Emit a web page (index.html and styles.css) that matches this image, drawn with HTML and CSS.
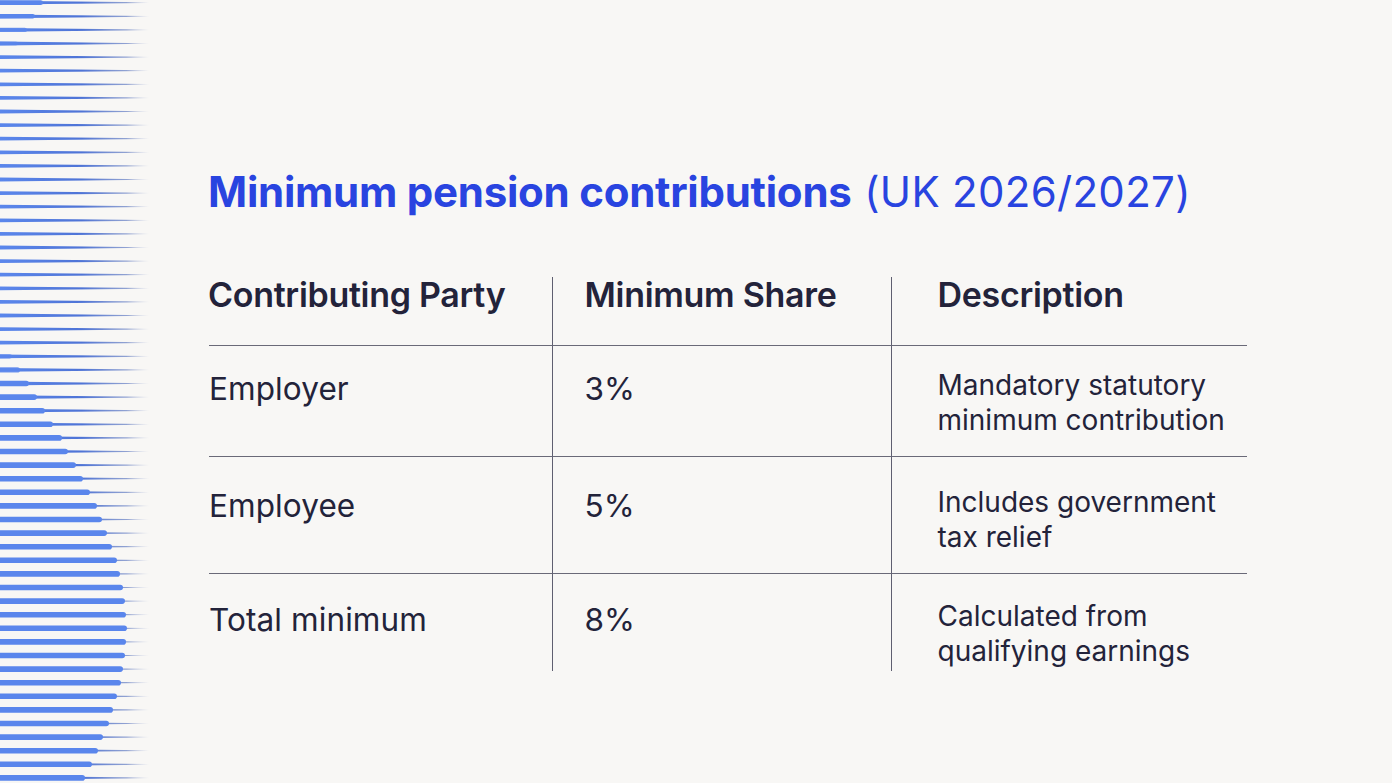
FILE: index.html
```html
<!DOCTYPE html>
<html lang="en">
<head>
<meta charset="utf-8">
<title>Minimum pension contributions</title>
<link rel="stylesheet" href="styles.css">
</head>
<body>
<div class="page">
  <svg class="deco" width="150" height="783" viewBox="0 0 150 783" aria-hidden="true">
    <defs>
      <linearGradient id="g" x1="0" x2="1" y1="0" y2="0">
        <stop offset="0" stop-color="#5b87ec"/>
        <stop offset="0.55" stop-color="#4f74d6"/>
        <stop offset="0.85" stop-color="#6f86c6" stop-opacity="0.75"/>
        <stop offset="1" stop-color="#8a9ac8" stop-opacity="0"/>
      </linearGradient>
      <polygon id="t" points="0,-1.9 149,-0.35 149,0.35 0,1.9" fill="url(#g)"/>
    </defs>
    <g>
      <use href="#t" y="2.7"/><use href="#t" y="16.3"/><use href="#t" y="29.9"/><use href="#t" y="43.5"/>
      <use href="#t" y="57.1"/><use href="#t" y="70.7"/><use href="#t" y="84.3"/><use href="#t" y="97.9"/>
      <use href="#t" y="111.5"/><use href="#t" y="125.1"/><use href="#t" y="138.7"/><use href="#t" y="152.3"/>
      <use href="#t" y="165.9"/><use href="#t" y="179.5"/><use href="#t" y="193.1"/><use href="#t" y="206.7"/>
      <use href="#t" y="220.3"/><use href="#t" y="233.9"/><use href="#t" y="247.5"/><use href="#t" y="261.1"/>
      <use href="#t" y="274.7"/><use href="#t" y="288.3"/><use href="#t" y="301.9"/><use href="#t" y="315.5"/>
      <use href="#t" y="329.1"/><use href="#t" y="342.7"/><use href="#t" y="356.3"/><use href="#t" y="369.9"/>
      <use href="#t" y="383.5"/><use href="#t" y="397.1"/><use href="#t" y="410.7"/><use href="#t" y="424.3"/>
      <use href="#t" y="437.9"/><use href="#t" y="451.5"/><use href="#t" y="465.1"/><use href="#t" y="478.7"/>
      <use href="#t" y="492.3"/><use href="#t" y="505.9"/><use href="#t" y="519.5"/><use href="#t" y="533.1"/>
      <use href="#t" y="546.7"/><use href="#t" y="560.3"/><use href="#t" y="573.9"/><use href="#t" y="587.5"/>
      <use href="#t" y="601.1"/><use href="#t" y="614.7"/><use href="#t" y="628.3"/><use href="#t" y="641.9"/>
      <use href="#t" y="655.5"/><use href="#t" y="669.1"/><use href="#t" y="682.7"/><use href="#t" y="696.3"/>
      <use href="#t" y="709.9"/><use href="#t" y="723.5"/><use href="#t" y="737.1"/><use href="#t" y="750.7"/>
      <use href="#t" y="764.3"/><use href="#t" y="777.9"/>
    </g>
    <g fill="#5a86ec">
      <rect x="-6" y="0.3" width="49" height="4.8" rx="2.4"/>
      <rect x="-6" y="14" width="41" height="4.6" rx="2.3"/>
      <rect x="-6" y="27.7" width="33" height="4.4" rx="2.2" opacity="0.8"/>
      <rect x="-6" y="41.4" width="24" height="4.2" rx="2.1" opacity="0.5"/>
      <rect x="-6" y="353.9" width="18" height="4.8" rx="2.4" opacity="0.6"/>
      <rect x="-6" y="367.3" width="26" height="5.2" rx="2.6" opacity="0.85"/>
      <rect x="-6" y="380.7" width="35" height="5.6" rx="2.8"/>
      <rect x="-6" y="394.3" width="43" height="5.6" rx="2.8"/>
      <rect x="-6" y="407.9" width="51" height="5.6" rx="2.8"/>
      <rect x="-6" y="421.5" width="59" height="5.6" rx="2.8"/>
      <rect x="-6" y="435.1" width="68" height="5.6" rx="2.8"/>
      <rect x="-6" y="448.7" width="74" height="5.6" rx="2.8"/>
      <rect x="-6" y="462.3" width="82" height="5.6" rx="2.8"/>
      <rect x="-6" y="475.9" width="89" height="5.6" rx="2.8"/>
      <rect x="-6" y="489.5" width="96" height="5.6" rx="2.8"/>
      <rect x="-6" y="503.1" width="103" height="5.6" rx="2.8"/>
      <rect x="-6" y="516.7" width="108" height="5.6" rx="2.8"/>
      <rect x="-6" y="530.3" width="113" height="5.6" rx="2.8"/>
      <rect x="-6" y="543.9" width="118" height="5.6" rx="2.8"/>
      <rect x="-6" y="557.5" width="123" height="5.6" rx="2.8"/>
      <rect x="-6" y="571.1" width="126" height="5.6" rx="2.8"/>
      <rect x="-6" y="584.7" width="129" height="5.6" rx="2.8"/>
      <rect x="-6" y="598.3" width="131" height="5.6" rx="2.8"/>
      <rect x="-6" y="611.9" width="132" height="5.6" rx="2.8"/>
      <rect x="-6" y="625.5" width="133" height="5.6" rx="2.8"/>
      <rect x="-6" y="639.1" width="132" height="5.6" rx="2.8"/>
      <rect x="-6" y="652.7" width="131" height="5.6" rx="2.8"/>
      <rect x="-6" y="666.3" width="129" height="5.6" rx="2.8"/>
      <rect x="-6" y="679.9" width="127" height="5.6" rx="2.8"/>
      <rect x="-6" y="693.5" width="123" height="5.6" rx="2.8"/>
      <rect x="-6" y="707.1" width="119" height="5.6" rx="2.8"/>
      <rect x="-6" y="720.7" width="115" height="5.6" rx="2.8"/>
      <rect x="-6" y="734.3" width="109" height="5.6" rx="2.8"/>
      <rect x="-6" y="747.9" width="104" height="5.6" rx="2.8"/>
      <rect x="-6" y="761.5" width="98" height="5.6" rx="2.8"/>
      <rect x="-6" y="775.1" width="91" height="5.6" rx="2.8"/>
    </g>
  </svg>

  <main class="content">
    <h1 class="title">Minimum pension contributions <span class="title-light">(UK 2026/2027)</span></h1>

    <div class="table">
      <div class="cell head c1">Contributing Party</div>
      <div class="cell head c2">Minimum Share</div>
      <div class="cell head c3">Description</div>

      <div class="cell row r1 c1">Employer</div>
      <div class="cell row r1 c2">3%</div>
      <div class="cell row r1 c3 desc">Mandatory statutory<br>minimum contribution</div>

      <div class="cell row r2 c1">Employee</div>
      <div class="cell row r2 c2">5%</div>
      <div class="cell row r2 c3 desc">Includes government<br>tax relief</div>

      <div class="cell row r3 c1">Total minimum</div>
      <div class="cell row r3 c2">8%</div>
      <div class="cell row r3 c3 desc">Calculated from<br>qualifying earnings</div>
    </div>
  </main>
</div>
</body>
</html>
```

FILE: styles.css
```css
html, body {
  margin: 0;
  padding: 0;
}

body {
  background: #f8f7f5;
  font-family: Inter, "Noto Sans", "Liberation Sans", sans-serif;
  color: #23233a;
  width: 1392px;
  height: 783px;
  overflow: hidden;
}

.page {
  display: flex;
  height: 783px;
}

.deco {
  flex: none;
  display: block;
}

.content {
  padding: 168px 0 0 58px;
}

.title {
  margin: 0;
  font-size: 42px;
  line-height: 48px;
  font-weight: 700;
  letter-spacing: -0.25px;
  color: #2944e0;
  white-space: nowrap;
}

.title-light {
  font-weight: 400;
  letter-spacing: 0.3px;
  margin-left: 3px;
}

.table {
  margin: 61px 0 0 1px;
  display: grid;
  grid-template-columns: 343px 339px 356px;
  grid-template-rows: 68px 111px 117px 98px;
}

.cell {
  font-size: 31.5px;
  line-height: 42px;
  letter-spacing: 0.1px;
  box-sizing: border-box;
}

.c2, .c3 {
  border-left: 1.5px solid #5f5f70;
}

.c2 {
  padding-left: 31.5px;
}

.c3 {
  padding-left: 45.5px;
}

.head {
  font-size: 34px;
  line-height: 36px;
  font-weight: 600;
  letter-spacing: -0.3px;
}

.head.c1 {
  margin-left: -1px;
}

.row {
  border-top: 1.5px solid #6a6a78;
}

.desc {
  font-size: 28px;
  line-height: 34.5px;
  letter-spacing: 0;
}

.r1 { padding-top: 22px; }
.r2 { padding-top: 28px; }
.r3 { padding-top: 25px; }
```
